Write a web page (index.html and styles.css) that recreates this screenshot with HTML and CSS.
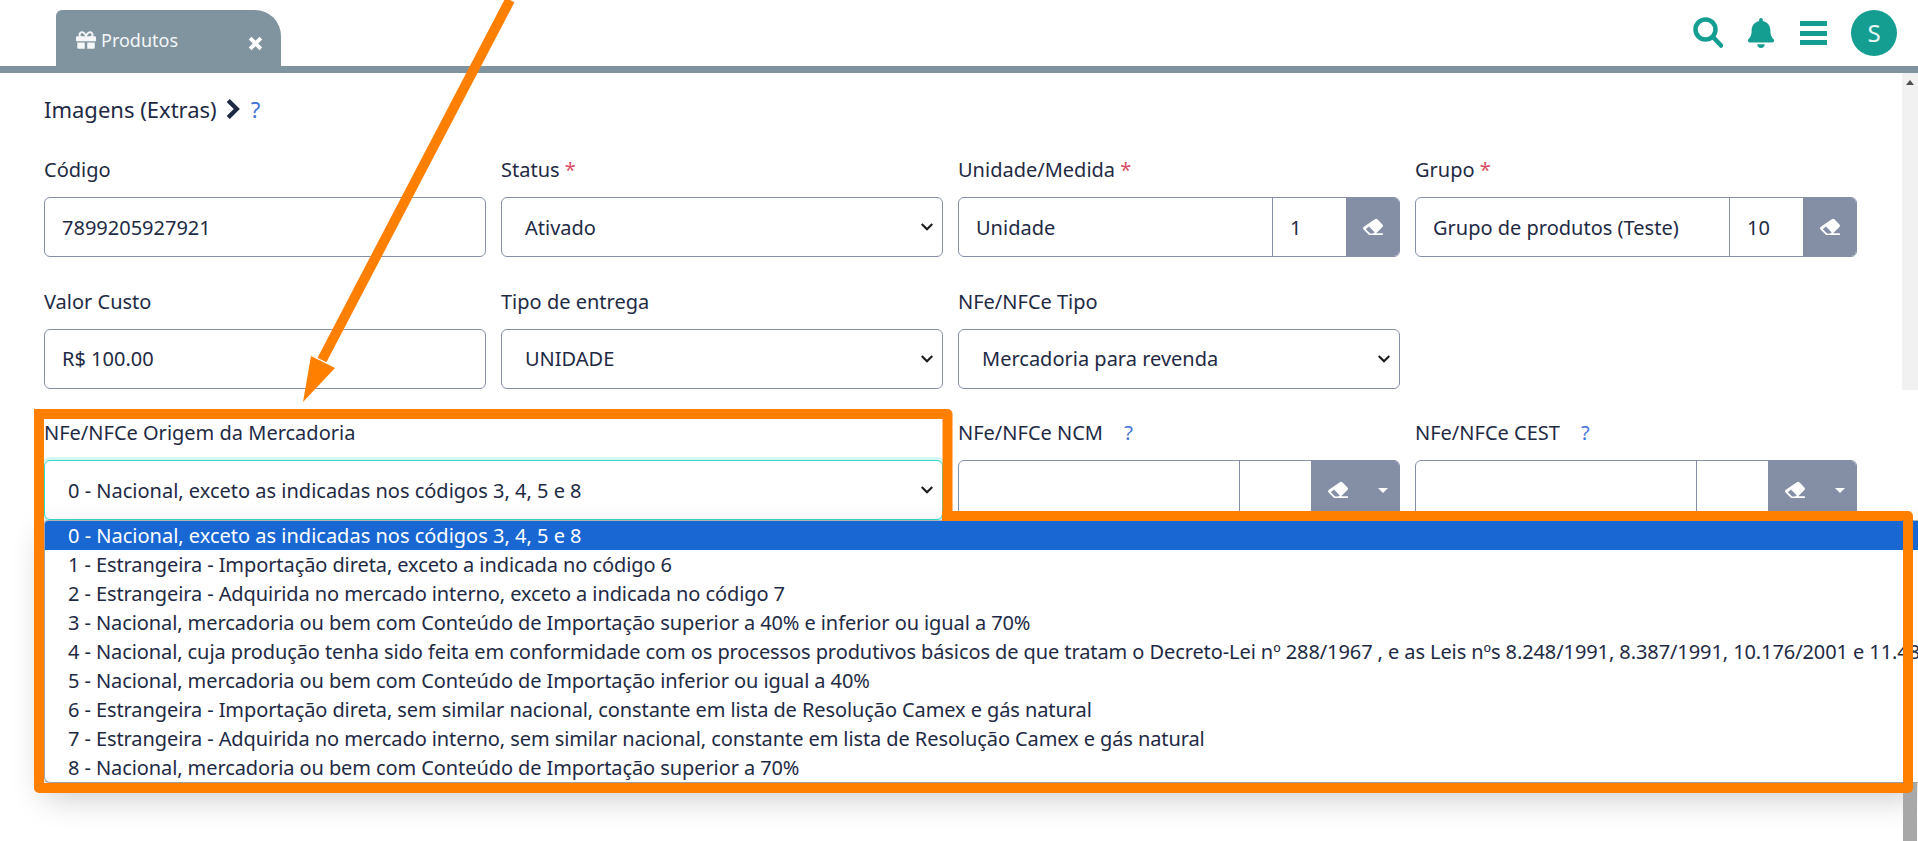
FILE: index.html
```html
<!DOCTYPE html>
<html lang="pt-BR">
<head>
    <meta charset="UTF-8">
    <title>Produtos</title>
    <link rel="stylesheet" href="styles.css">
</head>
<body>
    <header class="topbar">
        <div class="tab">
            <svg class="tab-gift" viewBox="0 0 512 512"><path fill="currentColor" d="M32 448c0 17.7 14.3 32 32 32h160V320H32v128zm256 32h160c17.7 0 32-14.3 32-32V320H288v160zm192-320h-42.100c6.200-12.100 10.100-25.500 10.100-40 0-48.500-39.500-88-88-88-41.600 0-68.500 21.300-103 68.300-34.500-47-61.400-68.300-103-68.300-48.500 0-88 39.500-88 88 0 14.500 3.800 27.900 10.100 40H32c-17.700 0-32 14.300-32 32v80c0 8.800 7.200 16 16 16h480c8.800 0 16-7.200 16-16v-80c0-17.700-14.300-32-32-32zm-326.100 0c-22.100 0-40-17.900-40-40s17.900-40 40-40c19.900 0 34.600 3.300 86.100 80h-86.100zm206.100 0h-86.100c51.400-76.500 65.700-80 86.100-80 22.100 0 40 17.900 40 40s-17.900 40-40 40z"/></svg>
            <span class="tab-name">Produtos</span>
            <svg class="tab-close" viewBox="0 0 14 14"><path d="M2 2l10 10M12 2L2 12" stroke="currentColor" stroke-width="3.6" fill="none"/></svg>
        </div>
        <div class="top-icons">
            <svg class="ico-search" viewBox="0 0 30 31"><circle cx="12.5" cy="12.5" r="10" fill="none" stroke="currentColor" stroke-width="4.5"/><path d="M20 20l8 8.5" stroke="currentColor" stroke-width="4.5" stroke-linecap="round"/></svg>
            <svg class="ico-bell" viewBox="0 0 448 512"><path fill="currentColor" d="M224 512c35.300 0 64-28.700 64-64H160c0 35.300 28.700 64 64 64zm215.400-149.700c-19.300-20.800-55.500-52-55.500-154.300 0-77.700-54.500-139.900-127.900-155.200V32c0-17.700-14.300-32-32-32s-32 14.300-32 32v20.800C118.600 68.100 64.100 130.300 64.100 208c0 102.300-36.200 133.500-55.500 154.300-6 6.400-8.700 14.100-8.600 21.700.1 16.400 13 32 32.100 32h383.800c19.100 0 32-15.600 32.100-32 .1-7.600-2.600-15.300-8.600-21.700z"/></svg>
            <div class="ico-bars"><i></i><i></i><i></i></div>
            <div class="avatar">S</div>
        </div>
    </header>

    <main class="page">
        <div class="crumb">
            <span>Imagens (Extras)</span>
            <svg class="crumb-arrow" viewBox="0 0 12 18"><path d="M2.5 2l7 7-7 7" fill="none" stroke="currentColor" stroke-width="3.6"/></svg>
            <span class="help">?</span>
        </div>

        <div class="form-grid">
            <div class="field">
                <label>Código</label>
                <input class="control" value="7899205927921">
            </div>
            <div class="field">
                <label>Status <b>*</b></label>
                <div class="control select">Ativado<svg class="caret" viewBox="0 0 12 8"><path d="M1.500 1.500L6 6l4.500-4.500" fill="none" stroke="currentColor" stroke-width="1.800"/></svg></div>
            </div>
            <div class="field">
                <label>Unidade/Medida <b>*</b></label>
                <div class="group">
                    <div class="cell grow">Unidade</div>
                    <div class="cell code">1</div>
                    <div class="btn"><svg class="eraser" viewBox="0 0 24 20"><use href="#eraser"/></svg></div>
                </div>
            </div>
            <div class="field">
                <label>Grupo <b>*</b></label>
                <div class="group">
                    <div class="cell grow">Grupo de produtos (Teste)</div>
                    <div class="cell code">10</div>
                    <div class="btn"><svg class="eraser" viewBox="0 0 24 20"><use href="#eraser"/></svg></div>
                </div>
            </div>

            <div class="field">
                <label>Valor Custo</label>
                <input class="control" value="R$ 100.00">
            </div>
            <div class="field">
                <label>Tipo de entrega</label>
                <div class="control select">UNIDADE<svg class="caret" viewBox="0 0 12 8"><path d="M1.500 1.500L6 6l4.500-4.500" fill="none" stroke="currentColor" stroke-width="1.800"/></svg></div>
            </div>
            <div class="field">
                <label>NFe/NFCe Tipo</label>
                <div class="control select">Mercadoria para revenda<svg class="caret" viewBox="0 0 12 8"><path d="M1.500 1.500L6 6l4.500-4.500" fill="none" stroke="currentColor" stroke-width="1.800"/></svg></div>
            </div>
            <div class="field"></div>

            <div class="field wide">
                <label>NFe/NFCe Origem da Mercadoria</label>
                <div class="control select focused">0 - Nacional, exceto as indicadas nos códigos 3, 4, 5 e 8<svg class="caret" viewBox="0 0 12 8"><path d="M1.500 1.500L6 6l4.500-4.500" fill="none" stroke="currentColor" stroke-width="1.800"/></svg></div>
            </div>
            <div class="field">
                <label>NFe/NFCe NCM <span class="help">?</span></label>
                <div class="group">
                    <div class="cell grow"></div>
                    <div class="cell code code-sm"></div>
                    <div class="btn btn-drop"><svg class="eraser" viewBox="0 0 24 20"><use href="#eraser"/></svg><i class="drop"></i></div>
                </div>
            </div>
            <div class="field">
                <label>NFe/NFCe CEST <span class="help">?</span></label>
                <div class="group">
                    <div class="cell grow"></div>
                    <div class="cell code code-sm"></div>
                    <div class="btn btn-drop"><svg class="eraser" viewBox="0 0 24 20"><use href="#eraser"/></svg><i class="drop"></i></div>
                </div>
            </div>
        </div>
    </main>

    <ul class="options">
        <li class="on">0 - Nacional, exceto as indicadas nos códigos 3, 4, 5 e 8</li>
        <li>1 - Estrangeira - Importação direta, exceto a indicada no código 6</li>
        <li>2 - Estrangeira - Adquirida no mercado interno, exceto a indicada no código 7</li>
        <li>3 - Nacional, mercadoria ou bem com Conteúdo de Importação superior a 40% e inferior ou igual a 70%</li>
        <li>4 - Nacional, cuja produção tenha sido feita em conformidade com os processos produtivos básicos de que tratam o Decreto-Lei nº 288/1967 , e as Leis nºs 8.248/1991, 8.387/1991, 10.176/2001 e 11.484/2007</li>
        <li>5 - Nacional, mercadoria ou bem com Conteúdo de Importação inferior ou igual a 40%</li>
        <li>6 - Estrangeira - Importação direta, sem similar nacional, constante em lista de Resolução Camex e gás natural</li>
        <li>7 - Estrangeira - Adquirida no mercado interno, sem similar nacional, constante em lista de Resolução Camex e gás natural</li>
        <li>8 - Nacional, mercadoria ou bem com Conteúdo de Importação superior a 70%</li>
    </ul>

    <div class="scroll-track"><i class="scroll-up"></i></div>
    <div class="scroll-thumb"></div>

    <!-- eraser icon + orange marks drawn on top of the screenshot -->
    <svg class="defs" width="0" height="0">
        <symbol id="eraser" viewBox="0 0 24 20">
            <path fill="#fff" d="M14 1.500a2 2 0 0 1 2.800 0l5.700 5.700a2 2 0 0 1 0 2.800L15.500 17H23v2H8.500a2 2 0 0 1-1.400-.6L1.500 12.800a2 2 0 0 1 0-2.800z"/>
            <path fill="#848fa6" d="M7.500 9.500l6.500 6.500-2 1.300H8.800L4 12.500z"/>
        </symbol>
    </svg>
    <svg class="marks" viewBox="0 0 1918 841">
        <path class="mark-box" d="M34 414H947.500V517"/>
        <path class="mark-box" d="M942 516H1908V788H39V409"/>
        <path class="mark-line" d="M510 0L322 360"/>
        <path class="mark-head" d="M303 402L311 356L335 368Z"/>
    </svg>
</body>
</html>
```

FILE: styles.css
```css
* {
    box-sizing: border-box;
}

html, body {
    margin: 0;
    height: 100%;
    overflow: hidden;
}

body {
    position: relative;
    background-color: #ffffff;
    font-family: "Noto Sans", "Open Sans", sans-serif;
    font-size: 20px;
    color: #1e2a44;
}

/* top bar */
.topbar {
    height: 73px;
    padding-left: 56px;
    padding-right: 21px;
    border-bottom: 7px solid #7f949f;
    display: flex;
    justify-content: space-between;
    align-items: flex-end;
}

.tab {
    width: 225px;
    height: 56px;
    padding: 17px 18px 0 20px;
    display: flex;
    align-items: flex-start;
    color: #f4f6f7;
    background-color: #7f949f;
    border-radius: 6px 26px 0 0;
    font-size: 18px;
}

.tab-gift {
    width: 20px;
    height: 20px;
    margin-top: 3px;
    margin-right: 5px;
}

.tab-name {
    flex: 1;
    line-height: 26px;
}

.tab-close {
    width: 15px;
    height: 15px;
    margin-top: 9px;
    color: #ffffff;
}

.top-icons {
    align-self: flex-start;
    height: 66px;
    padding-top: 10px;
    display: flex;
    align-items: flex-start;
    color: #149e92;
}

.ico-search {
    width: 30px;
    height: 31px;
    margin-top: 7px;
    margin-right: 24px;
}

.ico-bell {
    width: 28px;
    height: 30px;
    margin-top: 8px;
    margin-right: 25px;
}

.ico-bars {
    width: 27px;
    height: 24px;
    margin-top: 11px;
    margin-right: 24px;
    display: flex;
    flex-direction: column;
    justify-content: space-between;
}

.ico-bars i {
    height: 5px;
    background-color: #149e92;
}

.avatar {
    width: 46px;
    height: 46px;
    border-radius: 50%;
    background-color: #149e92;
    color: #e8f5f3;
    font-size: 24px;
    line-height: 46px;
    text-align: center;
}

/* form */
.page {
    padding: 21px 61px 0 44px;
}

.crumb {
    height: 30px;
    display: flex;
    align-items: center;
    font-size: 22px;
}

.crumb-arrow {
    width: 15px;
    height: 22px;
    margin-left: 8px;
    margin-right: 11px;
}

.help {
    color: #3f74d6;
    margin-left: 16px;
}

.crumb .help {
    margin-left: 0;
}

.form-grid {
    margin-top: 33px;
    display: grid;
    grid-template-columns: repeat(4, 1fr);
    column-gap: 15px;
    row-gap: 31.5px;
}

.wide {
    grid-column: span 2;
}

.field label {
    display: block;
    height: 26px;
    line-height: 26px;
    margin-bottom: 14px;
}

.field b {
    color: #dc4c64;
    font-weight: normal;
}

.control {
    width: 100%;
    height: 60px;
    padding: 0 17px;
    display: flex;
    align-items: center;
    justify-content: space-between;
    border: 1px solid #8590a6;
    border-radius: 6px;
    background-color: #ffffff;
    font-family: inherit;
    font-size: 20px;
    color: #1e2a44;
}

.select {
    padding-left: 23px;
    padding-right: 8px;
}

.caret {
    width: 14px;
    height: 10px;
    color: #1a1a1a;
}

.focused {
    border-color: #2fdccb;
    box-shadow: 0 0 0 3px #d3f6f2;
}

.group {
    height: 60px;
    display: flex;
    border: 1px solid #8590a6;
    border-radius: 6px;
    overflow: hidden;
}

.cell {
    height: 100%;
    padding: 0 17px;
    display: flex;
    align-items: center;
    border-right: 1px solid #8590a6;
}

.grow {
    flex: 1;
}

.code {
    width: 73px;
    border-right: none;
}

.code-sm {
    width: 71px;
}

.btn {
    width: 53px;
    display: flex;
    align-items: center;
    justify-content: center;
    background-color: #848fa6;
}

.btn-drop {
    width: 88px;
    justify-content: flex-start;
    gap: 29px;
    padding-left: 16px;
}

.eraser {
    width: 22px;
    height: 18px;
}

.drop {
    width: 0;
    height: 0;
    border-left: 5px solid transparent;
    border-right: 5px solid transparent;
    border-top: 5px solid #ffffff;
}

/* open select list */
.options {
    position: absolute;
    top: 520px;
    left: 44px;
    right: 0;
    height: 263px;
    margin: 0;
    padding: 0;
    list-style: none;
    overflow: hidden;
    background-color: #ffffff;
    border-radius: 4px 0 0 6px;
    border-top: 1px solid #b4b4b4;
    border-bottom: 1px solid #a0a0a0;
    border-left: 1px solid #a0a0a0;
    box-shadow: 0 14px 32px rgba(0, 0, 0, 0.22);
}

.options li {
    height: 29px;
    line-height: 29px;
    padding-left: 23px;
    white-space: nowrap;
    letter-spacing: -0.09px;
}

.options li.on {
    background-color: #1967d2;
    color: #ffffff;
    letter-spacing: 0;
}

/* scrollbar */
.scroll-track {
    position: absolute;
    top: 73px;
    right: 0;
    width: 16px;
    height: 317px;
    background-color: #f1f1f1;
}

.scroll-up {
    display: block;
    width: 0;
    margin: 7px auto 0;
    border-left: 4px solid transparent;
    border-right: 4px solid transparent;
    border-bottom: 5px solid #505050;
}

.scroll-thumb {
    position: absolute;
    top: 783px;
    right: 1px;
    width: 14px;
    height: 58px;
    background-color: #a8a8a8;
}

/* orange annotation */
.defs {
    position: absolute;
}

.marks {
    position: absolute;
    top: 0;
    left: 0;
    width: 1918px;
    height: 841px;
}

.mark-box {
    fill: none;
    stroke: #ff7f00;
    stroke-width: 10px;
    stroke-linejoin: round;
}

.mark-line {
    fill: none;
    stroke: #ff7f00;
    stroke-width: 10px;
}

.mark-head {
    fill: #ff7f00;
}
```
